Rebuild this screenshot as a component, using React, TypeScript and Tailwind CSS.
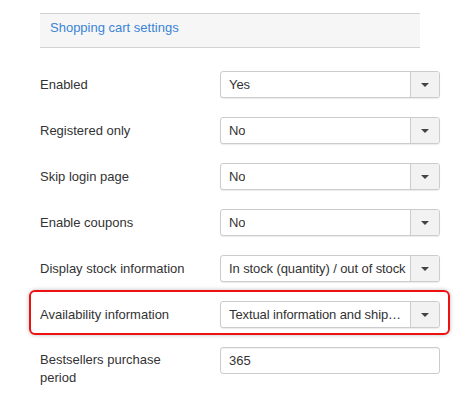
const rows = [
  { label: "Enabled", value: "Yes" },
  { label: "Registered only", value: "No" },
  { label: "Skip login page", value: "No" },
  { label: "Enable coupons", value: "No" },
  { label: "Display stock information", value: "In stock (quantity) / out of stock", clip: true },
  { label: "Availability information", value: "Textual information and shipping time", marked: true },
];

const Select = ({ value, clip }: { value: string; clip?: boolean }) => (
  <div className="flex w-[220px] h-[27px] border border-[#cccccc] rounded-[3px] bg-white shadow-[0_1px_1px_rgba(0,0,0,0.08)] overflow-hidden">
    <div className="flex-1 min-w-0 pl-2 pr-[3px] flex items-center text-[13px] text-[#333] tracking-[-0.1px] whitespace-nowrap overflow-hidden">
      <span className={clip ? "block overflow-hidden whitespace-nowrap" : "block overflow-hidden whitespace-nowrap text-ellipsis"}>
        {value}
      </span>
    </div>
    <div className="w-[29px] shrink-0 border-l border-[#cccccc] bg-[#f2f2f2] flex items-center justify-center">
      <span className="block w-0 h-0 border-l-[4px] border-r-[4px] border-t-[4px] border-l-transparent border-r-transparent border-t-[#444]" />
    </div>
  </div>
);

const App = () => {
  return (
    <div
      className="w-[472px] h-[396px] bg-white pl-10 pt-[13px]"
      style={{ fontFamily: '"Liberation Sans", Arial, sans-serif' }}
    >
      <div className="w-[380px] h-[35px] bg-[#f6f6f6] border-t border-b border-[#d2d2d2] pl-[10px] flex items-center">
        <span className="text-[13px] text-[#3a85d6] -mt-[6px]">Shopping cart settings</span>
      </div>

      <div className="mt-[23px] w-[400px] flex flex-col gap-[19px]">
        {rows.map((r) => (
          <div key={r.label} className="relative flex items-center h-[27px]">
            {r.marked && (
              <div className="absolute -top-[11px] -bottom-[7px] -left-[11px] -right-[10px] border-2 border-[#ee1111] rounded-[6px] shadow-[0_0_4px_rgba(0,0,0,0.25)] pointer-events-none" />
            )}
            <div className="w-[180px] text-[13px] text-[#333]">{r.label}</div>
            <Select value={r.value} clip={r.clip} />
          </div>
        ))}

        <div className="flex items-start">
          <div className="w-[180px] text-[13px] text-[#333] leading-[18px] pt-[4px]">
            Bestsellers purchase
            <br />
            period
          </div>
          <div className="w-[220px] h-[27px] border border-[#cccccc] rounded-[3px] bg-white px-2 flex items-center text-[13px] text-[#333] shadow-[inset_0_1px_1px_rgba(0,0,0,0.06)]">
            365
          </div>
        </div>
      </div>
    </div>
  );
};

export default App;
